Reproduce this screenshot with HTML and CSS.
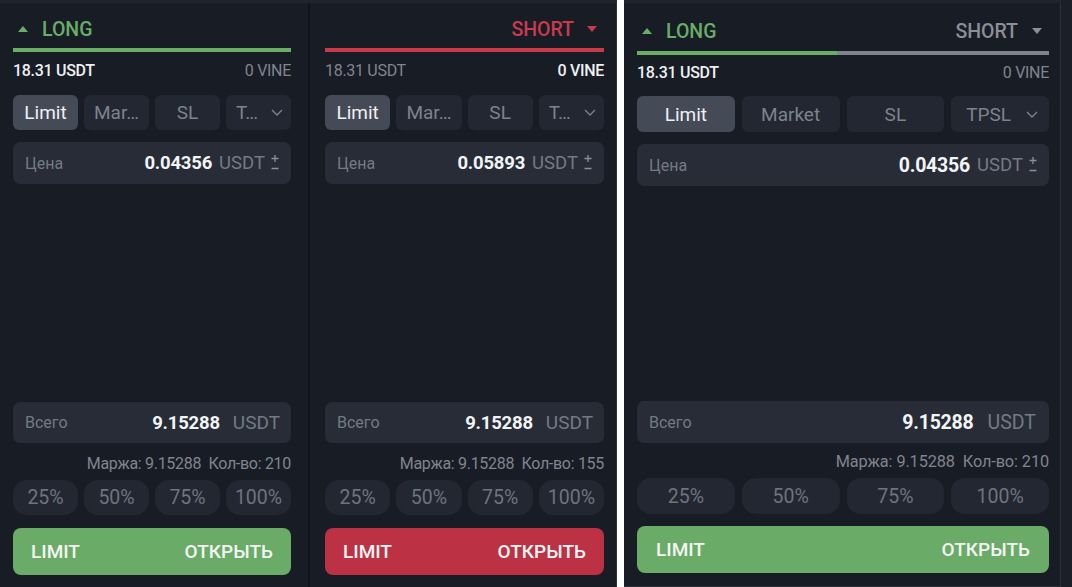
FILE: index.html
```html
<!DOCTYPE html>
<html lang="ru">
<head>
<meta charset="utf-8">
<title>Trade panels</title>
<link rel="stylesheet" href="styles.css">
</head>
<body>
<div class="page">
  <div class="group">
    <section class="panel panel-a">
      <div class="head">
        <span class="side long">
          <svg class="tri" viewBox="0 0 10 6"><path d="M0 6 L5 0 L10 6 Z"/></svg>LONG
        </span>
      </div>
      <div class="bar bar-green"></div>
      <div class="bal"><span class="strong">18.31 USDT</span><span class="muted">0 VINE</span></div>
      <div class="tabs">
        <div class="tab active">Limit</div>
        <div class="tab">Mar…</div>
        <div class="tab">SL</div>
        <div class="tab tab-dd">T…<svg class="chev" viewBox="0 0 12 7"><path d="M1 1 L6 6 L11 1"/></svg></div>
      </div>
      <div class="field">
        <span class="label">Цена</span>
        <span class="val">0.04356</span><span class="unit">USDT</span>
        <svg class="pm" viewBox="0 0 10 18"><path d="M5 1 V8 M1.5 4.5 H8.5 M1.5 14.5 H8.5"/></svg>
      </div>
      <div class="spacer"></div>
      <div class="field total">
        <span class="label">Всего</span>
        <span class="val">9.15288</span><span class="unit wide">USDT</span>
      </div>
      <div class="info">Маржа: 9.15288&nbsp;&nbsp;Кол-во: 210</div>
      <div class="pcts">
        <div class="pct">25%</div><div class="pct">50%</div><div class="pct">75%</div><div class="pct">100%</div>
      </div>
      <div class="go go-green"><span>LIMIT</span><span>ОТКРЫТЬ</span></div>
    </section>
    <section class="panel panel-b">
      <div class="head head-right">
        <span class="side short">SHORT<svg class="tri" viewBox="0 0 10 6"><path d="M0 0 L10 0 L5 6 Z"/></svg></span>
      </div>
      <div class="bar bar-red"></div>
      <div class="bal"><span class="muted">18.31 USDT</span><span class="strong">0 VINE</span></div>
      <div class="tabs">
        <div class="tab active">Limit</div>
        <div class="tab">Mar…</div>
        <div class="tab">SL</div>
        <div class="tab tab-dd">T…<svg class="chev" viewBox="0 0 12 7"><path d="M1 1 L6 6 L11 1"/></svg></div>
      </div>
      <div class="field">
        <span class="label">Цена</span>
        <span class="val">0.05893</span><span class="unit">USDT</span>
        <svg class="pm" viewBox="0 0 10 18"><path d="M5 1 V8 M1.5 4.5 H8.5 M1.5 14.5 H8.5"/></svg>
      </div>
      <div class="spacer"></div>
      <div class="field total">
        <span class="label">Всего</span>
        <span class="val">9.15288</span><span class="unit wide">USDT</span>
      </div>
      <div class="info">Маржа: 9.15288&nbsp;&nbsp;Кол-во: 155</div>
      <div class="pcts">
        <div class="pct">25%</div><div class="pct">50%</div><div class="pct">75%</div><div class="pct">100%</div>
      </div>
      <div class="go go-red"><span>LIMIT</span><span>ОТКРЫТЬ</span></div>
    </section>
  </div>
  <div class="gap"></div>
  <div class="group2">
    <section class="panel panel-c">
      <div class="head head-split">
        <span class="side long">
          <svg class="tri" viewBox="0 0 10 6"><path d="M0 6 L5 0 L10 6 Z"/></svg>LONG
        </span>
        <span class="side off">SHORT<svg class="tri" viewBox="0 0 10 6"><path d="M0 0 L10 0 L5 6 Z"/></svg></span>
      </div>
      <div class="bar bar-split"><div class="bar-fill"></div></div>
      <div class="bal"><span class="strong">18.31 USDT</span><span class="muted">0 VINE</span></div>
      <div class="tabs">
        <div class="tab active">Limit</div>
        <div class="tab">Market</div>
        <div class="tab">SL</div>
        <div class="tab tab-dd">TPSL<svg class="chev" viewBox="0 0 12 7"><path d="M1 1 L6 6 L11 1"/></svg></div>
      </div>
      <div class="field">
        <span class="label">Цена</span>
        <span class="val">0.04356</span><span class="unit">USDT</span>
        <svg class="pm" viewBox="0 0 10 18"><path d="M5 1 V8 M1.5 4.5 H8.5 M1.5 14.5 H8.5"/></svg>
      </div>
      <div class="spacer"></div>
      <div class="field total">
        <span class="label">Всего</span>
        <span class="val">9.15288</span><span class="unit wide">USDT</span>
      </div>
      <div class="info">Маржа: 9.15288&nbsp;&nbsp;Кол-во: 210</div>
      <div class="pcts">
        <div class="pct">25%</div><div class="pct">50%</div><div class="pct">75%</div><div class="pct">100%</div>
      </div>
      <div class="go go-green"><span>LIMIT</span><span>ОТКРЫТЬ</span></div>
    </section>
    <div class="edge"></div>
  </div>
</div>
</body>
</html>
```

FILE: styles.css
```css
* { box-sizing: border-box; }
html, body { margin: 0; padding: 0; }
body {
  background: #ffffff;
  font-family: Roboto, "Noto Sans", sans-serif;
  color: #eceff2;
  width: 1072px;
  height: 587px;
  overflow: hidden;
}
.page { display: flex; height: 587px; }
.group {
  width: 617px;
  display: flex;
  background: #181c25;
  border-top: 3px solid #1f242d;
  border-right: 1px solid #2e323a;
}
.gap { width: 7px; background: #ffffff; }
.group2 {
  width: 448px;
  display: flex;
  background: #1b2029;
}
.panel {
  display: flex;
  flex-direction: column;
  height: 584px;
  background: #181c25;
}
.panel-a { width: 310px; padding: 0 17px 12px 13px; border-right: 2px solid #10141a; }
.panel-b { width: 306px; padding: 0 12px 12px 15px; }
.panel-c {
  width: 437px;
  height: 587px;
  padding: 0 11px 13px 13px;
  border-top: 3px solid #1f242d;
  border-right: 1px solid #2b3039;
  border-bottom: 1px solid #2b3039;
}
.edge { flex: 1; background: #1a1f28; }

.head {
  display: flex;
  align-items: center;
  height: 22px;
  margin-top: 16px;
}
.panel-c .head { margin-top: 18px; }
.head-right { justify-content: flex-end; }
.head-split { justify-content: space-between; }
.side {
  display: flex;
  align-items: center;
  font-size: 19.5px;
  font-weight: 500;
  line-height: 22px;
}
.side .tri { width: 10px; height: 6px; }
.long { color: #69ad67; }
.long .tri { fill: #69ad67; margin: 0 14px 2px 5px; }
.short { color: #cb3a4c; }
.short .tri { fill: #cb3a4c; margin: 0 7px 2px 13px; }
.off { color: #8b8f96; }
.off .tri { fill: #8b8f96; margin: 0 7px 2px 14px; }

.bar { height: 4px; margin-top: 7px; }
.panel-c .bar { margin-top: 8px; }
.bar-green { background: #69ad67; }
.bar-red { background: #c8394a; }
.bar-split { background: #7f838b; display: flex; }
.bar-fill { width: 48.5%; background: #69ad67; }

.bal {
  display: flex;
  justify-content: space-between;
  font-size: 16px;
  line-height: 18px;
  margin-top: 10px;
  letter-spacing: -0.3px;
}
.panel-c .bal { margin-top: 9px; }
.strong { color: #eef0f3; font-weight: 500; }
.muted { color: #80858e; }

.tabs {
  display: grid;
  grid-template-columns: repeat(4, 1fr);
  gap: 6px;
  margin-top: 15px;
}
.panel-c .tabs { gap: 7px; margin-top: 14px; }
.tab {
  height: 35px;
  border-radius: 6px;
  background: #222732;
  color: #7d838c;
  font-size: 19px;
  display: flex;
  align-items: center;
  justify-content: center;
  white-space: nowrap;
}
.panel-c .tab { height: 36px; }
.tab.active { background: #454b56; color: #eef0f3; }
.tab-dd { justify-content: space-between; padding: 0 8px 0 10px; }
.panel-c .tab-dd { padding: 0 11px 0 15px; }
.chev { width: 12px; height: 7px; fill: none; stroke: #7d838c; stroke-width: 1.3; }

.field {
  display: flex;
  align-items: center;
  height: 42px;
  margin-top: 12px;
  border-radius: 7px;
  background: #272c37;
  padding: 0 11px 0 12px;
}
.label { flex: 1; color: #747a84; font-size: 16px; }
.val { color: #f2f4f6; font-size: 19.5px; font-weight: 700; letter-spacing: -0.2px; }
.panel-a .val, .panel-b .val { font-size: 18.5px; }
.unit { color: #747a84; font-size: 18.5px; margin-left: 7px; }
.unit.wide { margin-left: 14px; font-size: 19.5px; margin-right: 2px; }
.panel-a .unit.wide, .panel-b .unit.wide { margin-right: 0; margin-left: 13px; font-size: 19px; }
.pm { width: 10px; height: 18px; margin-left: 5px; fill: none; stroke: #8a9099; stroke-width: 1.3; }
.total { margin-top: 0; height: 41px; }
.panel-c .total { height: 42px; }

.spacer { flex: 1; }

.info {
  text-align: right;
  color: #80858e;
  font-size: 16px;
  line-height: 22px;
  margin-top: 10px;
  letter-spacing: -0.3px;
}
.panel-c .info { margin-top: 8px; font-size: 16.3px; letter-spacing: -0.1px; }

.pcts {
  display: grid;
  grid-template-columns: repeat(4, 1fr);
  gap: 6px;
  margin-top: 5px;
}
.panel-c .pcts { gap: 7px; }
.pct {
  height: 35px;
  border-radius: 14px;
  background: #222731;
  color: #6e747d;
  font-size: 19.5px;
  display: flex;
  align-items: center;
  justify-content: center;
}
.panel-c .pct { height: 36px; }

.go {
  display: flex;
  justify-content: space-between;
  align-items: center;
  height: 47px;
  margin-top: 13px;
  border-radius: 8px;
  padding: 0 18px 0 18px;
  font-size: 19px;
  font-weight: 500;
  color: #f4f6f4;
}
.panel-c .go { margin-top: 12px; padding: 0 19px; }
.go-green { background: #6aab67; }
.go-red { background: #bd3145; }
```
